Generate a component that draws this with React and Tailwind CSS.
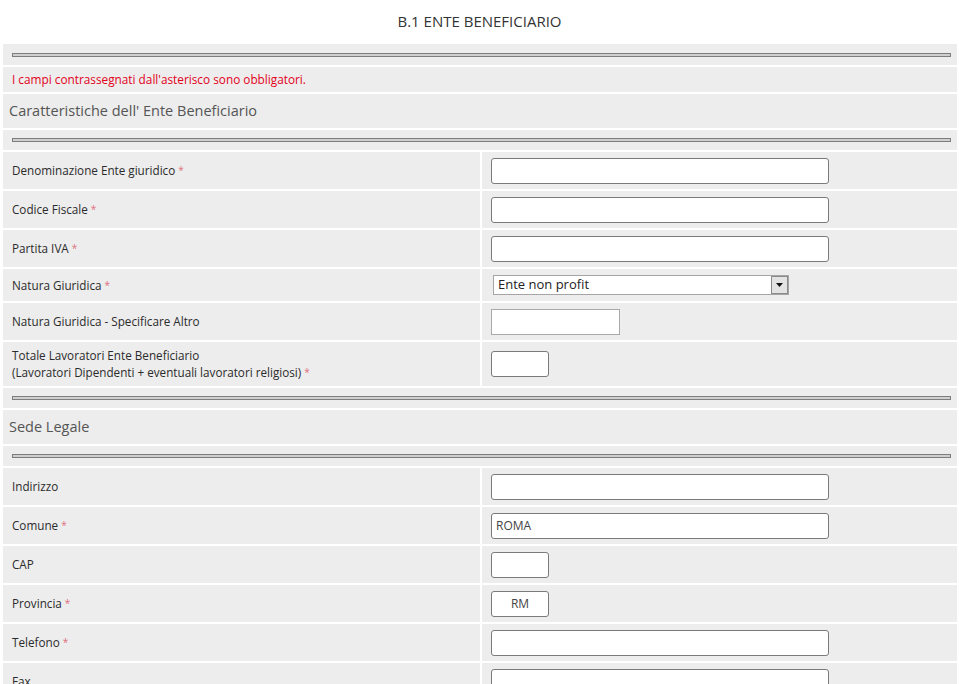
import React from "react";

const font = { fontFamily: '"Open Sans", "Liberation Sans", sans-serif' };

function Rule() {
  return (
    <div className="h-[20px] bg-[#ededed] flex items-center pl-[9px] pr-[6px]">
      <div className="h-[4px] w-full border border-[#7d7d7d] bg-[#cfcfcf]" />
    </div>
  );
}

function Req() {
  return <span className="text-[#e0707e] text-[10px] align-top ml-[3px]">*</span>;
}

function TextBox({ size = "wide", value = "", center = false, square = false }) {
  const widths = { wide: "w-[338px]", small: "w-[58px]", mid: "w-[129px]" };
  return (
    <div
      className={`${widths[size]} h-[26px] bg-white border flex items-center px-[4px] text-[12px] text-[#444] ${
        square ? "border-[#a9a9a9]" : "border-[#7a7a7a] rounded-[3px]"
      } ${center ? "justify-center" : ""}`}
    >
      {value}
    </div>
  );
}

function Select() {
  return (
    <div className="ml-[2px] w-[296px] h-[20px] bg-white border border-[#a5a5a5] flex items-center">
      <span className="flex-1 pl-[4px] text-[13px] text-[#222]">Ente non profit</span>
      <div className="w-[17px] h-[18px] bg-[#e3e3e3] border border-[#8a8a8a] flex items-center justify-center">
        <svg width="7" height="4" viewBox="0 0 7 4">
          <path d="M0 0h7L3.5 4z" fill="#111" />
        </svg>
      </div>
    </div>
  );
}

function Field({ label, req, h = "h-[37px]", children }) {
  return (
    <div className={`grid grid-cols-[477px_1fr] gap-[2px] ${h}`}>
      <div className="bg-[#ededed] flex items-center pl-[9px] text-[11.7px] leading-[17px] text-[#2b2b2b]">
        <div>
          {label}
          {req && <Req />}
        </div>
      </div>
      <div className="bg-[#ededed] flex items-center pl-[9px]">{children}</div>
    </div>
  );
}

export default function App() {
  return (
    <div className="bg-white w-[959px] h-[684px] overflow-hidden" style={font}>
      <div className="h-[44px] flex items-center justify-center pb-[2px] text-[15px] text-[#333]">
        B.1 ENTE BENEFICIARIO
      </div>
      <div className="ml-[3px] mr-[2px] flex flex-col gap-[2px]">
        <div className="h-[21px] bg-[#ededed] flex items-center pl-[9px] pr-[6px]">
          <div className="h-[4px] w-full border border-[#7d7d7d] bg-[#cfcfcf]" />
        </div>
        <div className="h-[25px] bg-[#ededed] flex items-center pl-[9px] text-[11.8px] text-[#e3001b]">
          I campi contrassegnati dall'asterisco sono obbligatori.
        </div>
        <div className="h-[34px] bg-[#ededed] flex items-center pl-[6px] text-[14.5px] text-[#555]">
          Caratteristiche dell' Ente Beneficiario
        </div>
        <Rule />
        <Field label="Denominazione Ente giuridico" req>
          <TextBox />
        </Field>
        <Field label="Codice Fiscale" req>
          <TextBox />
        </Field>
        <Field label="Partita IVA" req>
          <TextBox />
        </Field>
        <Field label="Natura Giuridica" req h="h-[32px]">
          <Select />
        </Field>
        <Field label="Natura Giuridica - Specificare Altro">
          <TextBox size="mid" square />
        </Field>
        <Field
          h="h-[44px]"
          label={
            <>
              Totale Lavoratori Ente Beneficiario
              <br />
              (Lavoratori Dipendenti + eventuali lavoratori religiosi)
            </>
          }
          req
        >
          <TextBox size="small" />
        </Field>
        <Rule />
        <div className="h-[34px] bg-[#ededed] flex items-center pl-[6px] text-[14.5px] text-[#555]">
          Sede Legale
        </div>
        <Rule />
        <Field label="Indirizzo">
          <TextBox />
        </Field>
        <Field label="Comune" req>
          <TextBox value="ROMA" />
        </Field>
        <Field label="CAP">
          <TextBox size="small" />
        </Field>
        <Field label="Provincia" req>
          <TextBox size="small" value="RM" center />
        </Field>
        <Field label="Telefono" req>
          <TextBox />
        </Field>
        <Field label="Fax">
          <TextBox />
        </Field>
      </div>
    </div>
  );
}
